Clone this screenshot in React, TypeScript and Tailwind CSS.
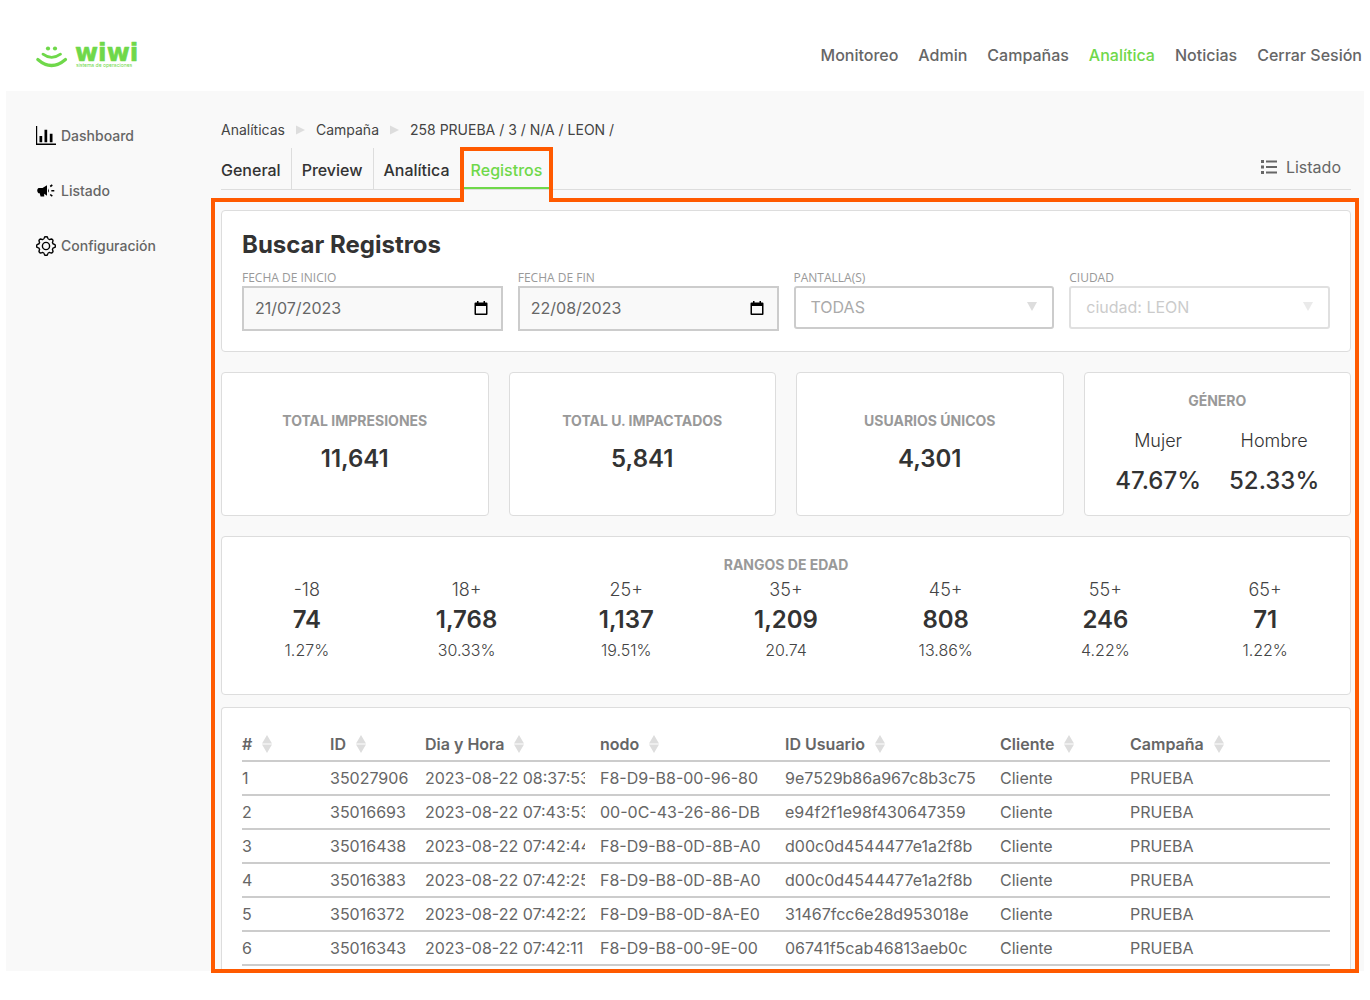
import { useState } from "react";

const navItems = ["Monitoreo", "Admin", "Campañas", "Analítica", "Noticias", "Cerrar Sesión"];

const ages = [
  { range: "-18", total: "74", percent: "1.27%" },
  { range: "18+", total: "1,768", percent: "30.33%" },
  { range: "25+", total: "1,137", percent: "19.51%" },
  { range: "35+", total: "1,209", percent: "20.74" },
  { range: "45+", total: "808", percent: "13.86%" },
  { range: "55+", total: "246", percent: "4.22%" },
  { range: "65+", total: "71", percent: "1.22%" },
];

const columns = [
  { title: "#", width: "w-[88px]" },
  { title: "ID", width: "w-[95px]" },
  { title: "Dia y Hora", width: "w-[175px]" },
  { title: "nodo", width: "w-[185px]" },
  { title: "ID Usuario", width: "w-[215px]" },
  { title: "Cliente", width: "w-[130px]" },
  { title: "Campaña", width: "" },
];

const rows = [
  ["1", "35027906", "2023-08-22 08:37:53", "F8-D9-B8-00-96-80", "9e7529b86a967c8b3c75", "Cliente", "PRUEBA"],
  ["2", "35016693", "2023-08-22 07:43:53", "00-0C-43-26-86-DB", "e94f2f1e98f430647359", "Cliente", "PRUEBA"],
  ["3", "35016438", "2023-08-22 07:42:44", "F8-D9-B8-0D-8B-A0", "d00c0d4544477e1a2f8b", "Cliente", "PRUEBA"],
  ["4", "35016383", "2023-08-22 07:42:25", "F8-D9-B8-0D-8B-A0", "d00c0d4544477e1a2f8b", "Cliente", "PRUEBA"],
  ["5", "35016372", "2023-08-22 07:42:22", "F8-D9-B8-0D-8A-E0", "31467fcc6e28d953018e", "Cliente", "PRUEBA"],
  ["6", "35016343", "2023-08-22 07:42:11", "F8-D9-B8-00-9E-00", "06741f5cab46813aeb0c", "Cliente", "PRUEBA"],
];

function Logo() {
  return (
    <svg width="104" height="30" viewBox="0 0 104 30" fill="#6fd84a" className="overflow-visible" aria-label="wiwi">
      <circle cx="12" cy="7.500" r="2.100" />
      <circle cx="19" cy="7.500" r="2.100" />
      <g fill="none" stroke="#6fd84a" strokeLinecap="round">
        <path d="M7 13.200Q15.500 19.600 24.500 13.200" strokeWidth="2.800" />
        <path d="M1.800 18.500Q15.500 30.500 29.500 18.500" strokeWidth="3.200" />
      </g>
      <text
        x="39"
        y="20"
        fontFamily="'DejaVu Sans', sans-serif"
        fontSize="25"
        fontWeight="700"
        stroke="#6fd84a"
        strokeWidth="0.6"
        strokeLinejoin="round"
      >
        wiwi
      </text>
      <text x="40" y="26" fontFamily="Inter, sans-serif" fontSize="5">
        sistema de operaciones
      </text>
    </svg>
  );
}

function ChartIcon() {
  return (
    <svg width="20" height="20" viewBox="0 0 20 20" aria-hidden="true">
      <path d="M0 0h1.200v17.600H20v1.300H0z" />
      <path d="M3.500 10h2.700v6.200H3.500zM8.500 3.700h2.700v12.500H8.500zM13.800 7.700h2.700v8.500h-2.700z" />
    </svg>
  );
}

function MegaphoneIcon() {
  return (
    <svg width="20" height="20" viewBox="0 0 20 20" aria-hidden="true">
      <path d="M2.500 7H6.500L11 4.300V14.800L8.200 12.800V15.600H4.600L3.700 12.200H2.500Q1.200 11.500 1.200 9.600T2.500 7z" />
      <path d="M12 7.300Q13.600 9.600 12 11.800z" />
      <path d="M14.200 5.500L16.300 4M15.300 9.700H18.300M14.200 13.500L16.300 15.200" stroke="#000" strokeWidth="1.600" />
    </svg>
  );
}

function GearIcon() {
  return (
    <svg width="20" height="20" viewBox="0 0 20 20" fill="none" stroke="#000" strokeWidth="1.400" strokeLinejoin="round" aria-hidden="true">
      <path d="M8.600 1Q10 .4 11.400 1Q11.800 3.400 13.300 3.600Q14.600 3 15.800 3L17 4.200Q17 5.400 16.400 6.700Q16.600 8.200 19 8.600Q19.600 10 19 11.400Q16.600 11.800 16.400 13.300Q17 14.600 17 15.800L15.800 17Q14.600 17 13.300 16.400Q11.800 16.600 11.400 19Q10 19.600 8.600 19Q8.200 16.600 6.700 16.400Q5.400 17 4.200 17L3 15.800Q3 14.600 3.600 13.300Q3.400 11.800 1 11.400Q.4 10 1 8.600Q3.400 8.200 3.600 6.700Q3 5.400 3 4.200L4.200 3Q5.400 3 6.700 3.600Q8.200 3.400 8.600 1z" />
      <circle cx="10" cy="10" r="3.600" />
    </svg>
  );
}

function CalendarIcon() {
  return (
    <svg width="14" height="15" viewBox="0 0 14 15" aria-hidden="true">
      <path d="M3 0h1.500v1.500h5V0H11v1.500h1.500q1 0 1 1v10.500q0 1-1 1h-11q-1 0-1-1V2.500q0-1 1-1H3zM2 5v7.500h10V5z" fillRule="evenodd" />
    </svg>
  );
}

function ListIcon() {
  return (
    <svg width="16" height="14" viewBox="0 0 16 14" fill="#666" aria-hidden="true">
      <path d="M0 0h3v3H0zM0 5.500h3v3H0zM0 11h3v3H0zM5 .5h11v2H5zM5 6h11v2H5zM5 11.500h11v2H5z" />
    </svg>
  );
}

function SortIcon() {
  return (
    <svg width="10" height="18" viewBox="0 0 10 18" fill="#ddd" aria-hidden="true">
      <path d="M5 0L10 8.500H0zM0 9.500H10L5 18z" />
    </svg>
  );
}

function Crumb() {
  return (
    <svg width="9" height="10" viewBox="0 0 9 10" fill="#ddd" aria-hidden="true">
      <path d="M0 0.500L9 5L0 9.500z" />
    </svg>
  );
}

function DateField({ id, label, initial }: { id: string; label: string; initial: string }) {
  const [value, setValue] = useState(initial);
  return (
    <div>
      <label htmlFor={id} className="block font-['Open_Sans',sans-serif] text-xs font-medium text-[#999]">
        {label}
      </label>
      <div className="flex h-[45px] items-center border-2 border-[#ccc] bg-[#f9f9f9] pl-[11px] pr-[13px]">
        <input
          id={id}
          value={value}
          onChange={(e) => setValue(e.target.value)}
          className="w-full min-w-0 flex-1 bg-transparent pb-[2px] text-base text-[#666] outline-none"
        />
        <button type="button" aria-label={`Abrir calendario: ${label}`}>
          <CalendarIcon />
        </button>
      </div>
    </div>
  );
}

function SelectField({ id, label, option, disabled }: { id: string; label: string; option: string; disabled?: boolean }) {
  return (
    <div>
      <label htmlFor={id} className="block font-['Open_Sans',sans-serif] text-xs font-medium text-[#999]">
        {label}
      </label>
      <div className={disabled ? "relative opacity-60" : "relative"}>
        <select
          id={id}
          disabled={disabled}
          className="block h-[43px] w-full appearance-none rounded-[3px] border-2 border-[#ccc] bg-white pb-[2px] pl-[15px] pr-8 text-base text-[#aaa] opacity-100"
        >
          <option>{option}</option>
        </select>
        <svg width="10" height="9" viewBox="0 0 10 9" fill="#ddd" className="pointer-events-none absolute right-[17px] top-4" aria-hidden="true">
          <path d="M0 0H10L5 9z" />
        </svg>
      </div>
    </div>
  );
}

function Stat({ title, value }: { title: string; value: string }) {
  return (
    <div className="rounded border border-[#ddd] bg-white pt-[38px] text-center">
      <h3 className="text-sm font-bold text-[#999]">{title}</h3>
      <p className="mt-[13px] text-2xl leading-[30px] font-semibold text-[#333]">{value}</p>
    </div>
  );
}

export default function App() {
  return (
    <div className="bg-white pb-7 font-[Inter,sans-serif] text-[#666]">
      <header className="flex h-[91px] items-center justify-between pl-9 pr-2">
        <a href="#" className="mt-5">
          <Logo />
        </a>
        <nav className="mt-[18px] flex gap-5">
          {navItems.map((item) => (
            <a key={item} href="#" className={item === "Analítica" ? "font-medium text-[#6fd84a]" : "font-medium"}>
              {item}
            </a>
          ))}
        </nav>
      </header>

      <div className="mx-[6px] flex bg-[#f9f9f9]">
        <aside className="w-[205px] shrink-0 pl-[30px] pt-[35px]">
          <nav className="flex flex-col gap-[35px] text-sm font-medium">
            <a href="#" className="flex items-center gap-[5px]">
              <ChartIcon />
              Dashboard
            </a>
            <a href="#" className="flex items-center gap-[5px]">
              <MegaphoneIcon />
              Listado
            </a>
            <a href="#" className="flex items-center gap-[5px]">
              <GearIcon />
              Configuración
            </a>
          </nav>
        </aside>

        <main className="mr-[5px] -mb-[2px] min-w-0 flex-1 pt-[29px]">
          <div className="flex items-center gap-[11px] pl-[10px] text-sm text-[#444]">
            <a href="#">Analíticas</a>
            <Crumb />
            <a href="#">Campaña</a>
            <Crumb />
            <span>258 PRUEBA / 3 / N/A / LEON /</span>
          </div>

          <div className="ml-[10px] mr-2 mt-2 flex justify-between border-b border-[#ddd]">
            <div className="flex h-[41px] font-medium text-[#333]">
              <a href="#" className="border-r border-[#ddd] pr-[10px] leading-[44px]">
                General
              </a>
              <a href="#" className="border-r border-[#ddd] px-[10px] leading-[44px]">
                Preview
              </a>
              <a href="#" className="pl-[10px] pr-[14px] leading-[44px]">
                Analítica
              </a>
              <a href="#" className="relative border-b-2 border-[#6fd84a] px-[7px] leading-[44px] text-[#6fd84a]">
                Registros
                {/* the outline opens into the panel below */}
                <span className="absolute -inset-x-1 -top-px h-[55px] border-x-4 border-t-4 border-[#ff5a00]" />
                <span className="absolute inset-x-0 top-[50px] z-10 h-1 bg-[#f9f9f9]" />
              </a>
            </div>
            <a href="#" className="flex h-[38px] items-center gap-[9px] pr-[10px]">
              <ListIcon />
              Listado
            </a>
          </div>

          <section className="mt-2 border-4 border-[#ff5a00] pl-[6px] pr-1 pt-2">
            <form className="rounded border border-[#ddd] bg-white p-5">
              <h2 className="mb-[11px] text-2xl leading-7 font-bold text-[#333]">Buscar Registros</h2>
              <div className="grid grid-cols-4 gap-[15px]">
                <DateField id="inicio" label="FECHA DE INICIO" initial="21/07/2023" />
                <DateField id="fin" label="FECHA DE FIN" initial="22/08/2023" />
                <SelectField id="pantallas" label="PANTALLA(S)" option="TODAS" />
                <SelectField id="ciudad" label="CIUDAD" option="ciudad: LEON" disabled />
              </div>
            </form>

            <div className="mt-5 grid grid-cols-4 gap-5">
              <Stat title="TOTAL IMPRESIONES" value="11,641" />
              <Stat title="TOTAL U. IMPACTADOS" value="5,841" />
              <Stat title="USUARIOS ÚNICOS" value="4,301" />
              <div className="rounded border border-[#ddd] bg-white pb-[19px] pt-[18px] text-center">
                <h3 className="text-sm font-bold text-[#999]">GÉNERO</h3>
                <div className="mt-[15px] flex justify-center gap-7 text-[#333]">
                  <div>
                    <p className="text-lg leading-[30px] font-light">Mujer</p>
                    <p className="mt-[10px] text-2xl leading-[30px] font-medium">47.67%</p>
                  </div>
                  <div>
                    <p className="text-lg leading-[30px] font-light">Hombre</p>
                    <p className="mt-[10px] text-2xl leading-[30px] font-medium">52.33%</p>
                  </div>
                </div>
              </div>
            </div>

            <div className="mt-5 rounded border border-[#ddd] bg-white px-[5px] pb-[29px] pt-[18px] text-center">
              <h3 className="text-sm font-bold text-[#999]">RANGOS DE EDAD</h3>
              <div className="grid grid-cols-7 text-[#444]">
                {ages.map((age) => (
                  <div key={age.range}>
                    <p className="text-lg leading-[30px] font-light">{age.range}</p>
                    <p className="text-2xl leading-[30px] font-semibold text-[#333]">{age.total}</p>
                    <p className="text-base leading-[30px] font-light">{age.percent}</p>
                  </div>
                ))}
              </div>
            </div>

            <div className="mt-3 rounded-t border border-b-0 border-[#ddd] bg-white px-5 pb-[3px] pt-5">
              <table className="w-full table-fixed border-separate border-spacing-0 text-left">
                <thead>
                  <tr>
                    {columns.map((column) => (
                      <th key={column.title} className={`${column.width} h-[34px] border-b-2 border-[#ccc] p-0 font-semibold`}>
                        <button type="button" className="flex items-center gap-[10px]">
                          {column.title}
                          <SortIcon />
                        </button>
                      </th>
                    ))}
                  </tr>
                </thead>
                <tbody>
                  {rows.map((row) => (
                    <tr key={row[0]}>
                      {row.map((cell, i) => (
                        <td key={i} className="h-[34px] border-b-2 border-[#ccc] py-0 pl-0 pr-[15px]">
                          <div className="overflow-hidden whitespace-nowrap">{cell}</div>
                        </td>
                      ))}
                    </tr>
                  ))}
                </tbody>
              </table>
            </div>
          </section>
        </main>
      </div>
    </div>
  );
}
